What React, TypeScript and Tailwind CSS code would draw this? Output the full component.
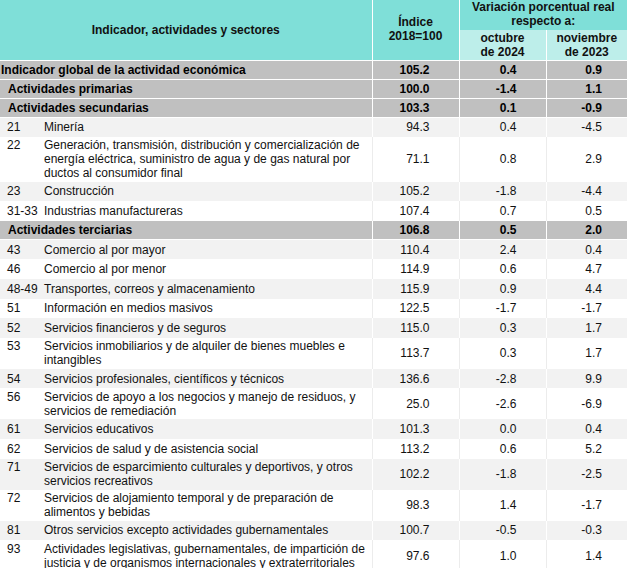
type Row = {
  kind: "main" | "sub";
  code?: string;
  label: string[];
  values: [string, string, string];
  indent?: boolean;
};

const rows: Row[] = [
  { kind: "main", label: ["Indicador global de la actividad económica"], values: ["105.2", "0.4", "0.9"] },
  { kind: "main", indent: true, label: ["Actividades primarias"], values: ["100.0", "-1.4", "1.1"] },
  { kind: "main", indent: true, label: ["Actividades secundarias"], values: ["103.3", "0.1", "-0.9"] },
  { kind: "sub", code: "21", label: ["Minería"], values: ["94.3", "0.4", "-4.5"] },
  {
    kind: "sub",
    code: "22",
    label: [
      "Generación, transmisión, distribución y comercialización de",
      "energía eléctrica, suministro de agua y de gas natural por",
      "ductos al consumidor final",
    ],
    values: ["71.1", "0.8", "2.9"],
  },
  { kind: "sub", code: "23", label: ["Construcción"], values: ["105.2", "-1.8", "-4.4"] },
  { kind: "sub", code: "31-33", label: ["Industrias manufactureras"], values: ["107.4", "0.7", "0.5"] },
  { kind: "main", indent: true, label: ["Actividades terciarias"], values: ["106.8", "0.5", "2.0"] },
  { kind: "sub", code: "43", label: ["Comercio al por mayor"], values: ["110.4", "2.4", "0.4"] },
  { kind: "sub", code: "46", label: ["Comercio al por menor"], values: ["114.9", "0.6", "4.7"] },
  { kind: "sub", code: "48-49", label: ["Transportes, correos y almacenamiento"], values: ["115.9", "0.9", "4.4"] },
  { kind: "sub", code: "51", label: ["Información en medios masivos"], values: ["122.5", "-1.7", "-1.7"] },
  { kind: "sub", code: "52", label: ["Servicios financieros y de seguros"], values: ["115.0", "0.3", "1.7"] },
  {
    kind: "sub",
    code: "53",
    label: ["Servicios inmobiliarios y de alquiler de bienes muebles e", "intangibles"],
    values: ["113.7", "0.3", "1.7"],
  },
  { kind: "sub", code: "54", label: ["Servicios profesionales, científicos y técnicos"], values: ["136.6", "-2.8", "9.9"] },
  {
    kind: "sub",
    code: "56",
    label: ["Servicios de apoyo a los negocios y manejo de residuos, y", "servicios de remediación"],
    values: ["25.0", "-2.6", "-6.9"],
  },
  { kind: "sub", code: "61", label: ["Servicios educativos"], values: ["101.3", "0.0", "0.4"] },
  { kind: "sub", code: "62", label: ["Servicios de salud y de asistencia social"], values: ["113.2", "0.6", "5.2"] },
  {
    kind: "sub",
    code: "71",
    label: ["Servicios de esparcimiento culturales y deportivos, y otros", "servicios recreativos"],
    values: ["102.2", "-1.8", "-2.5"],
  },
  {
    kind: "sub",
    code: "72",
    label: ["Servicios de alojamiento temporal y de preparación de", "alimentos y bebidas"],
    values: ["98.3", "1.4", "-1.7"],
  },
  { kind: "sub", code: "81", label: ["Otros servicios excepto actividades gubernamentales"], values: ["100.7", "-0.5", "-0.3"] },
  {
    kind: "sub",
    code: "93",
    label: [
      "Actividades legislativas, gubernamentales, de impartición de",
      "justicia y de organismos internacionales y extraterritoriales",
    ],
    values: ["97.6", "1.0", "1.4"],
  },
];

export default function App() {
  let stripe = 0;
  return (
    <div className="w-[627px] h-[568px] overflow-hidden bg-white font-['Liberation_Sans',Arial,sans-serif] text-[12px] text-[#111]">
      <table className="w-[627px] table-fixed border-collapse">
        <colgroup>
          <col className="w-[372px]" />
          <col className="w-[87px]" />
          <col className="w-[87px]" />
          <col className="w-[81px]" />
        </colgroup>
        <thead>
          <tr className="h-[29px]">
            <th rowSpan={2} className="bg-[#7fdfd8] border-r border-b border-white font-bold leading-[14px] text-center align-middle">
              Indicador, actividades y sectores
            </th>
            <th rowSpan={2} className="bg-[#7fdfd8] border-r border-b border-white font-bold leading-[14px] text-center align-middle pb-[2px]">
              Índice
              <br />
              2018=100
            </th>
            <th colSpan={2} className="bg-[#7fdfd8] font-bold leading-[14px] text-center align-middle pb-[2px]">
              Variación porcentual real
              <br />
              respecto a:
            </th>
          </tr>
          <tr className="h-[30px]">
            <th className="bg-[#bdeeea] border-r border-b border-white font-bold leading-[14px] text-center">
              octubre
              <br />
              de 2024
            </th>
            <th className="bg-[#bdeeea] border-b border-white font-bold leading-[14px] text-center">
              noviembre
              <br />
              de 2023
            </th>
          </tr>
        </thead>
        <tbody>
          {rows.map((row, i) => {
            if (row.kind === "main") {
              stripe = 0;
              return (
                <tr key={i} className="h-[19px] bg-[#c0c0c0] font-bold text-black leading-[14px]">
                  <td className={`border-r border-b border-white p-0 ${row.indent ? "pl-[8px]" : "pl-[1px]"}`}>
                    {row.label[0]}
                  </td>
                  <td className="border-r border-b border-white p-0 text-right pr-[29px]">{row.values[0]}</td>
                  <td className="border-r border-b border-white p-0 text-right pr-[29px]">{row.values[1]}</td>
                  <td className="border-b border-white p-0 text-right pr-[25px]">{row.values[2]}</td>
                </tr>
              );
            }
            const light = stripe % 2 === 0;
            stripe++;
            const line = light ? "border-white" : "border-[#ececec]";
            const multi = row.label.length > 1;
            return (
              <tr
                key={i}
                className={`leading-[14px] ${multi ? "" : "h-[19.6px]"} ${light ? "bg-[#f2f2f2]" : "bg-white"}`}
              >
                <td className={`border-r ${line} ${multi ? "py-[1.5px]" : "py-px"} align-middle`}>
                  <div className="flex">
                    <span className="w-[44px] shrink-0 pl-[7px]">{row.code}</span>
                    <span className="pr-1">
                      {row.label.map((l, j) => (
                        <div key={j} className="whitespace-nowrap">
                          {l}
                        </div>
                      ))}
                    </span>
                  </div>
                </td>
                <td className={`border-r ${line} p-0 text-right pr-[29px]`}>{row.values[0]}</td>
                <td className={`border-r ${line} p-0 text-right pr-[29px]`}>{row.values[1]}</td>
                <td className="p-0 text-right pr-[25px]">{row.values[2]}</td>
              </tr>
            );
          })}
        </tbody>
      </table>
    </div>
  );
}
